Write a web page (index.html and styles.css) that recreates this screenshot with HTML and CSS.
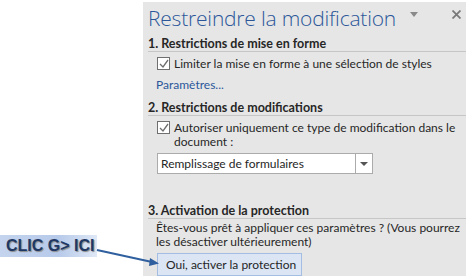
FILE: index.html
```html
<!DOCTYPE html>
<html>
<head>
    <meta charset='utf-8'>
    <title>Restreindre la modification</title>
    <link rel="stylesheet" href="styles.css">
</head>
<body>
    <div id="page">
        <div id="left">
            <div id="clic">CLIC G&gt; ICI</div>
        </div>
        <div id="panel">
            <div id="head">
                <p id="title">Restreindre la modification</p>
                <span id="menu"></span>
                <svg id="close" width="9" height="9" viewBox="0 0 9 9"><path d="M0.5 0.5 L8.5 8.5 M8.5 0.5 L0.5 8.5" stroke="#7a7a7a" stroke-width="1.8"/></svg>
            </div>

            <p class="section">1. Restrictions de mise en forme</p>
            <div class="check">
                <span class="box"><svg width="10" height="10" viewBox="0 0 10 10"><path d="M1 5 L4 8 L9 1" fill="none" stroke="#6e6e6e" stroke-width="1.3"/></svg></span>
                <span>Limiter la mise en forme à une sélection de styles</span>
            </div>
            <p id="params">Paramètres...</p>

            <p class="section">2. Restrictions de modifications</p>
            <div class="check" id="check2">
                <span class="box"><svg width="10" height="10" viewBox="0 0 10 10"><path d="M1 5 L4 8 L9 1" fill="none" stroke="#6e6e6e" stroke-width="1.3"/></svg></span>
                <span>Autoriser uniquement ce type de modification dans le document :</span>
            </div>
            <div id="select">
                <span id="selvalue">Remplissage de formulaires</span>
                <span id="selarrow"></span>
            </div>

            <p class="section" id="third">3. Activation de la protection</p>
            <p id="question">Êtes-vous prêt à appliquer ces paramètres ? (Vous pourrez les désactiver ultérieurement)</p>
            <div id="btn">Oui, activer la protection</div>
        </div>
        <svg id="arrow" width="170" height="279" viewBox="0 0 170 279">
            <line x1="97" y1="250" x2="152" y2="262" stroke="#2f5f9e" stroke-width="2"/>
            <path d="M159 263.5 L150 258 L149 266 Z" fill="#2f5f9e"/>
        </svg>
    </div>
</body>
</html>
```

FILE: styles.css
```css
*{
    margin: 0;
    box-sizing: border-box;
}
body{
    background-color: white;
    font-family: Lato, "Open Sans", sans-serif;
    font-size: 12px;
    line-height: 14px;
    color: #262626;
}
#page{
    position: relative;
    display: flex;
    width: 474px;
    height: 279px;
}
#left{
    width: 143px;
    padding-top: 235px;
}
#clic{
    width: 97px;
    height: 22px;
    background: linear-gradient(to right, #c4d4ee, #b7caea 60%, #dfe8f6);
    color: #1f3864;
    font-family: "Liberation Sans", sans-serif;
    font-weight: bold;
    font-size: 16px;
    line-height: 22px;
    padding-left: 6px;
    text-shadow: 1px 1px 1px #8a8a8a;
}
#panel{
    width: 323px;
    height: 274px;
    margin-top: 2px;
    background-color: #e6e6e6;
    padding-left: 5px;
}
#head{
    display: flex;
    align-items: center;
    height: 35px;
    padding-bottom: 4px;
}
#title{
    flex: 1;
    font-family: "Open Sans", sans-serif;
    font-size: 21px;
    line-height: 28px;
    font-weight: 300;
    color: #2b579a;
    letter-spacing: -0.2px;
}
#menu{
    width: 0;
    height: 0;
    border-left: 4px solid transparent;
    border-right: 4px solid transparent;
    border-top: 5px solid #8a8a8a;
    margin: 0 34px 6px 0;
}
#close{
    margin: 0 5px 6px 0;
}
.section{
    font-weight: bold;
    font-size: 12.5px;
    color: #262626;
    border-bottom: 1px solid #c6c6c6;
    margin-bottom: 5px;
}
.check{
    display: flex;
    align-items: flex-start;
    padding-left: 9px;
    padding-right: 8px;
}
.box{
    width: 13px;
    height: 13px;
    flex: none;
    border: 1px solid #6f6f6f;
    background-color: white;
    margin: 0 4px 0 0;
    display: flex;
    align-items: center;
    justify-content: center;
}
#params{
    color: #2b579a;
    padding: 7px 0 9px 8px;
}
#select{
    display: flex;
    width: 216px;
    height: 21px;
    margin: 4px 0 0 9px;
    background-color: white;
    border: 1px solid #ababab;
    align-items: center;
}
#selvalue{
    flex: 1;
    padding-left: 3px;
}
#selarrow{
    width: 17px;
    height: 19px;
    border-left: 1px solid #ababab;
    position: relative;
}
#selarrow::after{
    content: "";
    position: absolute;
    left: 4px;
    top: 8px;
    border-left: 4px solid transparent;
    border-right: 4px solid transparent;
    border-top: 4px solid #555;
}
#third{
    margin-top: 30px;
    margin-bottom: 2px;
}
#question{
    padding: 0 4px 0 8px;
}
#btn{
    width: 145px;
    height: 23px;
    margin: 4px 0 0 9px;
    padding-left: 8px;
    line-height: 21px;
    background-color: #dbe5f4;
    border: 1px solid #a3bde3;
}
#arrow{
    position: absolute;
    left: 0;
    top: 0;
    pointer-events: none;
}
```
